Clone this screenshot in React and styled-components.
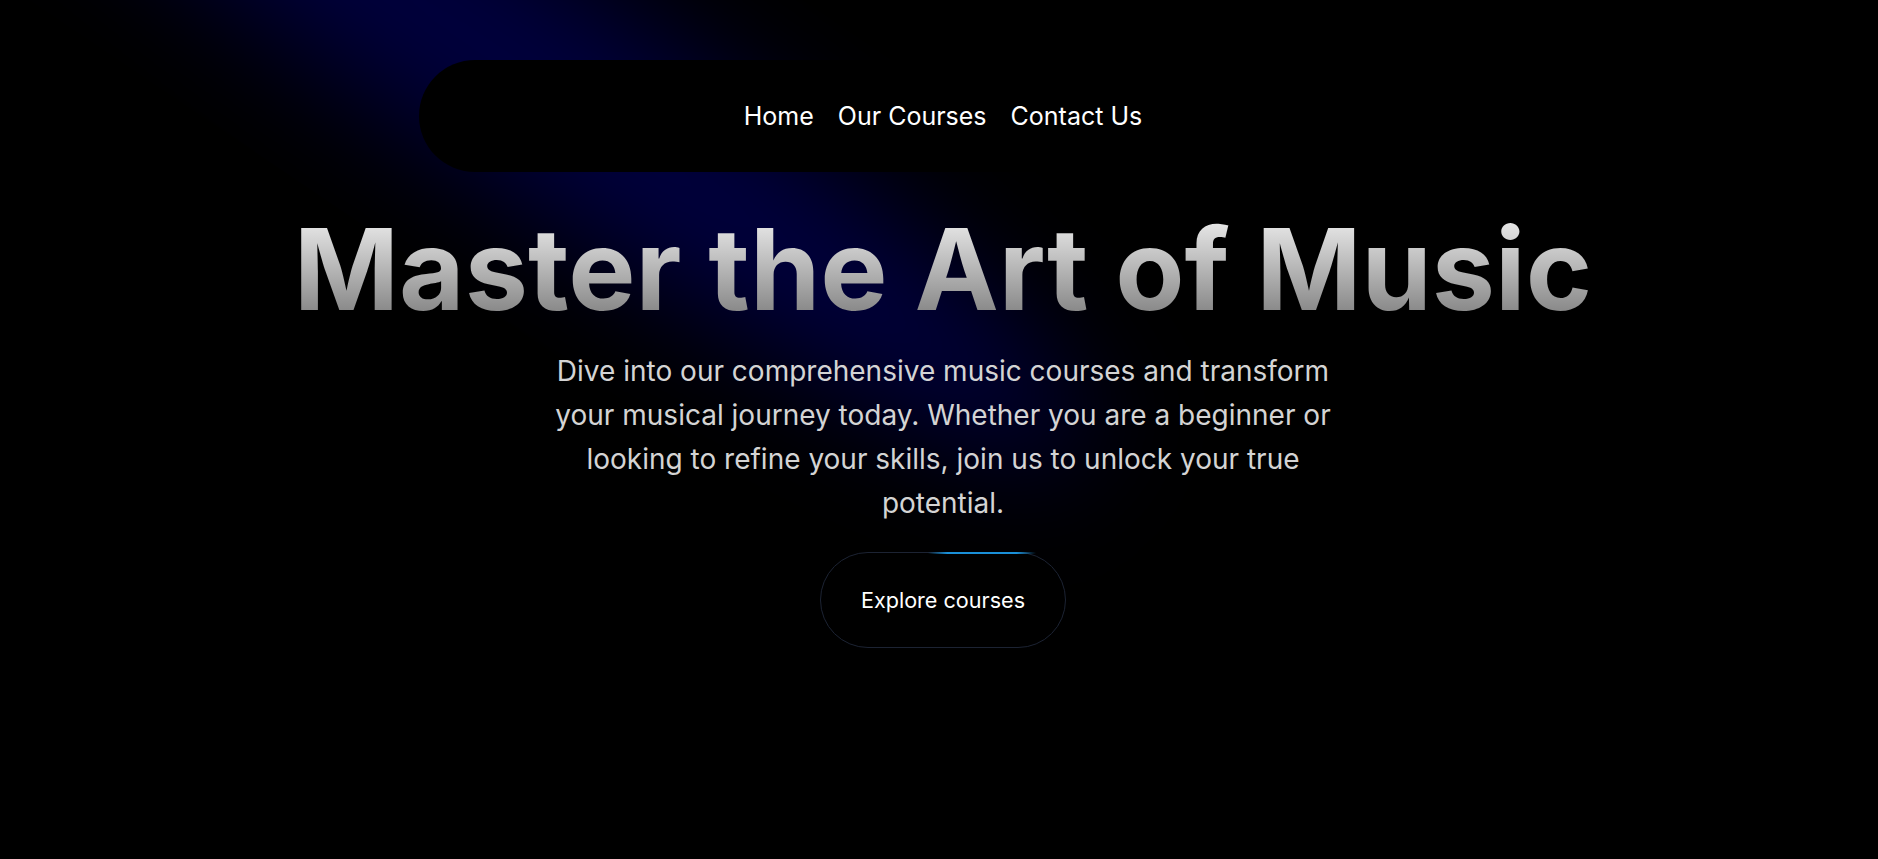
import React from 'react';
import styled, { createGlobalStyle } from 'styled-components';

const GlobalStyle = createGlobalStyle`
  html, body {
    margin: 0;
    padding: 0;
    background: #000;
  }
  * {
    box-sizing: border-box;
  }
`;

const Page = styled.div`
  position: relative;
  min-height: 100vh;
  background: #000;
  overflow: hidden;
  font-family: Inter, "Noto Sans", sans-serif;
`;

const Spotlight = styled.svg`
  position: absolute;
  top: 0;
  left: 0;
  width: 100%;
  height: 100%;
  pointer-events: none;
  z-index: 0;
`;

const Content = styled.div`
  position: relative;
  z-index: 1;
  display: flex;
  flex-direction: column;
  align-items: center;
  padding: 60px 0 0 8px;
`;

const NavPill = styled.nav`
  width: 1048px;
  height: 112px;
  border-radius: 56px;
  background: #000;
  display: flex;
  align-items: center;
  justify-content: center;
  gap: 24px;
`;

const NavLink = styled.a`
  color: #fff;
  font-size: 25px;
  text-decoration: none;
  cursor: pointer;
`;

const Title = styled.h1`
  margin: 41px 0 0;
  font-size: 113px;
  line-height: 1;
  font-weight: 700;
  background: linear-gradient(to bottom, #f0f0f0, #7a7a7a);
  -webkit-background-clip: text;
  background-clip: text;
  color: transparent;
`;

const Lead = styled.p`
  margin: 23px 0 0;
  max-width: 800px;
  text-align: center;
  color: #d4d4d4;
  font-size: 28px;
  line-height: 44px;
`;

const Button = styled.button`
  position: relative;
  margin-top: 27px;
  height: 96px;
  padding: 0 40px;
  border-radius: 48px;
  border: 1px solid #1c2333;
  background: #000;
  color: #fff;
  font-family: inherit;
  font-size: 21.6px;
  cursor: pointer;
`;

const Shine = styled.span`
  position: absolute;
  top: -1px;
  left: 44%;
  width: 44%;
  height: 2px;
  background: linear-gradient(90deg, rgba(14, 140, 214, 0), #1a90d8 18%, #1a90d8 82%, rgba(14, 140, 214, 0));
`;

const links = ['Home', 'Our Courses', 'Contact Us'];

export default function App() {
  return (
    <Page>
      <GlobalStyle />
      <Spotlight viewBox="0 0 1878 859" preserveAspectRatio="none">
        <defs>
          <filter id="glow" x="-50%" y="-50%" width="200%" height="200%">
            <feGaussianBlur stdDeviation="60" />
          </filter>
        </defs>
        <ellipse
          cx="490"
          cy="50"
          rx="720"
          ry="108"
          transform="rotate(34 490 50)"
          fill="#0000ff"
          fillOpacity="0.24"
          filter="url(#glow)"
        />
      </Spotlight>
      <Content>
        <NavPill>
          {links.map((l) => (
            <NavLink key={l}>{l}</NavLink>
          ))}
        </NavPill>
        <Title>Master the Art of Music</Title>
        <Lead>
          Dive into our comprehensive music courses and transform your musical journey today.
          Whether you are a beginner or looking to refine your skills, join us to unlock your
          true potential.
        </Lead>
        <Button>
          <Shine />
          Explore courses
        </Button>
      </Content>
    </Page>
  );
}
